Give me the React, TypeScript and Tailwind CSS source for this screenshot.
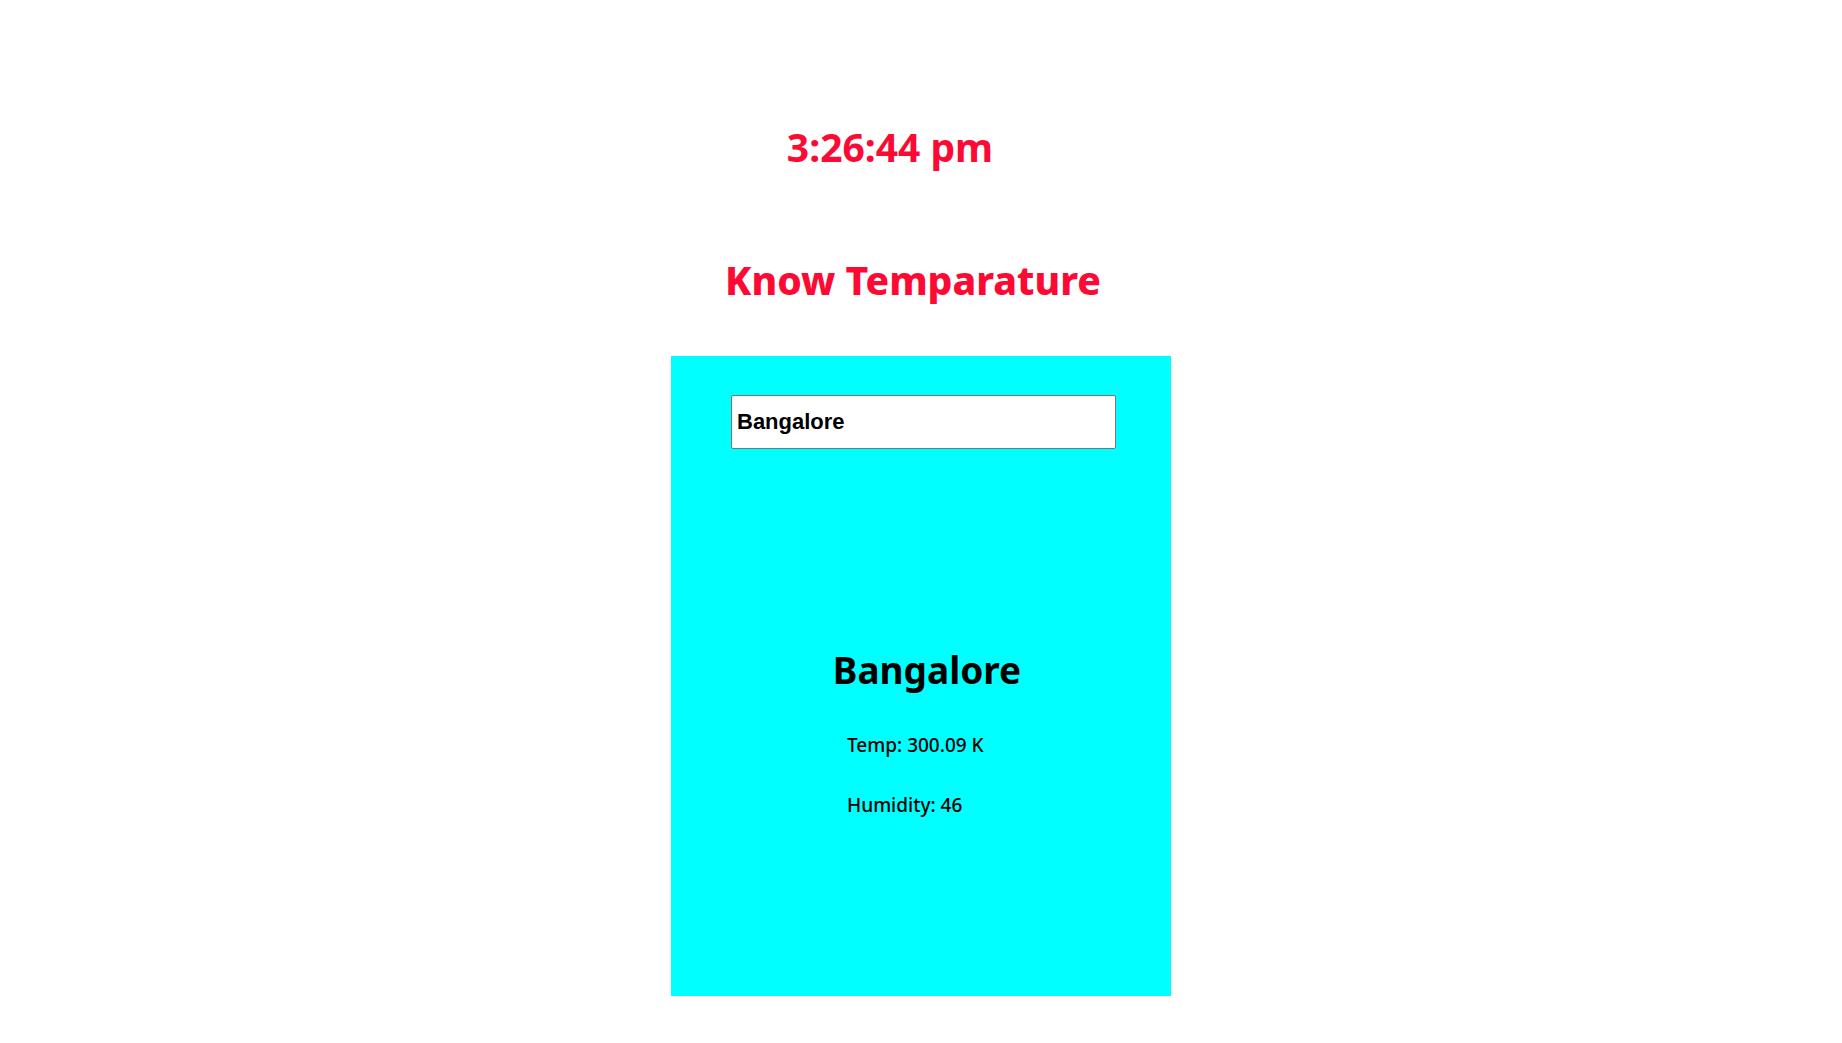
const FONT = { fontFamily: '"Noto Sans", "Open Sans", sans-serif' };

export default function App() {
  return (
    <div className="w-full bg-white" style={FONT}>
      <div className="flex flex-col items-center">
        <p className="mt-[127px] mr-[62px] text-[39px] leading-[40px] font-bold text-[#fc0a34]">
          3:26:44 pm
        </p>
        <h1 className="mt-[93px] mr-[16px] text-[39px] leading-[40px] font-extrabold text-[#fc0a34]">
          Know Temparature
        </h1>

        <div className="mt-[56px] w-[500px] h-[640px] bg-[#00ffff] flex flex-col">
          <input
            type="text"
            defaultValue="Bangalore"
            className="mt-[39px] ml-[60px] w-[385px] h-[54px] bg-white border border-[#767676] rounded-[2px] px-[5px] text-[22px] font-bold text-black outline-none"
            style={{ fontFamily: '"Liberation Sans", Arial, sans-serif' }}
          />
          <h2 className="mt-[201px] ml-[12px] text-center text-[37px] leading-[40px] font-bold text-black">
            Bangalore
          </h2>
          <p className="mt-[43px] ml-[176px] text-[19px] leading-[24px] font-medium text-black">Temp: 300.09 K</p>
          <p className="mt-[36px] ml-[176px] text-[19px] leading-[24px] font-medium text-black">Humidity: 46</p>
        </div>
      </div>
    </div>
  );
}
